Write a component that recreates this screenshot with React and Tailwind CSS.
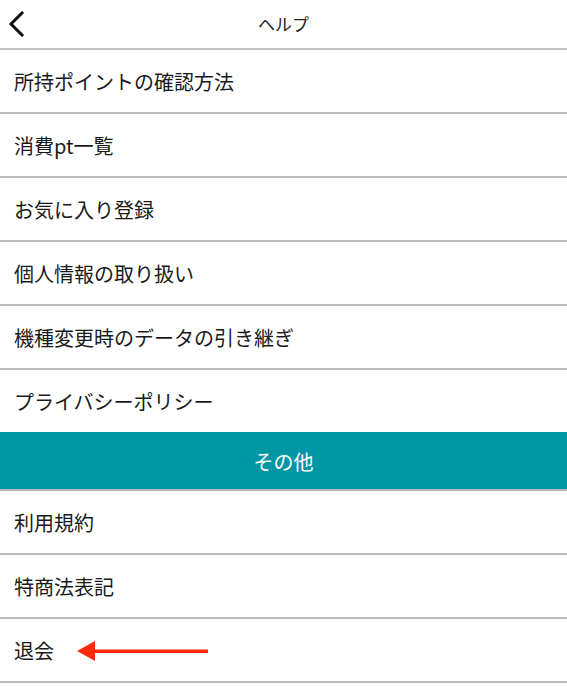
const helpItems = [
  '所持ポイントの確認方法',
  '消費pt一覧',
  'お気に入り登録',
  '個人情報の取り扱い',
  '機種変更時のデータの引き継ぎ',
  'プライバシーポリシー',
]

const otherItems = ['利用規約', '特商法表記', '退会']

function Row({ label, arrow }) {
  return (
    <div className="h-[62px] box-content border-b-2 border-[#bdbdbd] flex items-center px-[14px] text-[20px] text-[#1a1a1a]">
      <span className="pt-[2px]">{label}</span>
      {arrow && (
        <svg width="134" height="22" viewBox="0 0 134 22" className="ml-[23px] mt-[2px]">
          <polygon points="0,11 18,1 18,21" fill="#ff2a0a" />
          <rect x="16" y="9.5" width="115" height="3.5" fill="#ff2a0a" />
        </svg>
      )}
    </div>
  )
}

export default function App() {
  return (
    <div className="w-[567px] h-[692px] bg-white overflow-hidden" style={{ fontFamily: '"Noto Sans CJK JP", "Noto Sans", sans-serif' }}>
      <div className="h-[48px] box-content border-b-2 border-[#c4c4c4] relative flex items-center justify-center">
        <svg width="20" height="26" viewBox="0 0 20 26" className="absolute left-[7px] top-[11px]">
          <path d="M15 2 L4 13 L15 24" fill="none" stroke="#111" strokeWidth="3" strokeLinecap="square" />
        </svg>
        <span className="text-[17px] text-[#222]">ヘルプ</span>
      </div>
      {helpItems.map(l => <Row key={l} label={l} />)}
      <div className="h-[57px] box-content border-b-2 border-[#b8b8b8] bg-[#0096a3] flex items-center justify-center text-white text-[20px] -mt-[2px]">
        <span className="pt-[2px]">その他</span>
      </div>
      {otherItems.map(l => <Row key={l} label={l} arrow={l === '退会'} />)}
    </div>
  )
}
